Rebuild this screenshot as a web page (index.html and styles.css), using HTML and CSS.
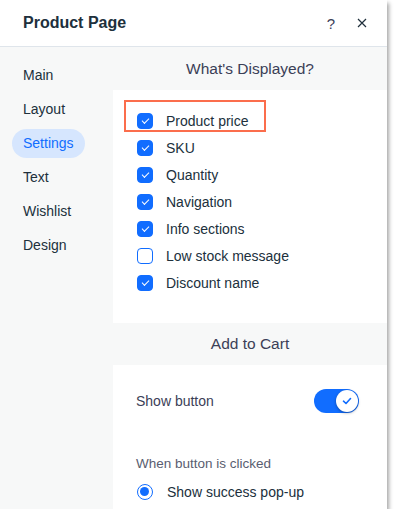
FILE: index.html
```html
<!DOCTYPE html>
<html lang="en">
<head>
    <meta charset="UTF-8">
    <meta name="viewport" content="width=device-width, initial-scale=1.0">
    <title>Product Page - Settings</title>
    <link rel="stylesheet" href="styles.css">
</head>
<body>
    <div class="panel">
        <div class="panel__header">
            <h1>Product Page</h1>
            <div class="header__actions">
                <span class="help__btn">?</span>
                <svg class="close__btn" width="10" height="10" viewBox="0 0 10 10">
                    <path d="M1 1L9 9M9 1L1 9" stroke="#20303c" stroke-width="1.2" fill="none"/>
                </svg>
            </div>
        </div>
        <div class="panel__body">
            <ul class="side__nav">
                <li>Main</li>
                <li>Layout</li>
                <li class="active">Settings</li>
                <li>Text</li>
                <li>Wishlist</li>
                <li>Design</li>
            </ul>
            <div class="panel__content">
                <div class="section__title">What's Displayed?</div>
                <div class="check__list">
                    <div class="highlight"></div>
                    <label class="check__row"><span class="checkbox checked"></span>Product price</label>
                    <label class="check__row"><span class="checkbox checked"></span>SKU</label>
                    <label class="check__row"><span class="checkbox checked"></span>Quantity</label>
                    <label class="check__row"><span class="checkbox checked"></span>Navigation</label>
                    <label class="check__row"><span class="checkbox checked"></span>Info sections</label>
                    <label class="check__row"><span class="checkbox"></span>Low stock message</label>
                    <label class="check__row"><span class="checkbox checked"></span>Discount name</label>
                </div>
                <div class="section__title section__title--cart">Add to Cart</div>
                <div class="cart__settings">
                    <div class="toggle__row">
                        <span>Show button</span>
                        <span class="toggle">
                            <span class="toggle__knob">
                                <svg width="10" height="8" viewBox="0 0 10 8">
                                    <path d="M1.5 4.2L4 6.5L8.5 1.5" stroke="#116dff" stroke-width="1.6" fill="none" stroke-linecap="round" stroke-linejoin="round"/>
                                </svg>
                            </span>
                        </span>
                    </div>
                    <div class="field__label">When button is clicked</div>
                    <label class="radio__row"><span class="radio"></span>Show success pop-up</label>
                </div>
            </div>
        </div>
    </div>
</body>
</html>
```

FILE: styles.css
```css
body {
    margin: 0;
    background: #fff;
    font-family: 'Liberation Sans', Arial, sans-serif;
    color: #20303c;
}
.panel {
    width: 387px;
    height: 509px;
    background: #fff;
    display: flex;
    flex-direction: column;
    box-shadow: 2px 3px 4px rgba(0, 0, 0, 0.35);
    overflow: hidden;
}
.panel__header {
    height: 46px;
    border-bottom: 1px solid #dfe5eb;
    display: flex;
    align-items: center;
    justify-content: space-between;
    padding: 0 20px 0 23px;
    flex-shrink: 0;
}
.panel__header h1 {
    margin: 0;
    font-size: 16px;
    font-weight: bold;
    color: #20303c;
}
.header__actions {
    display: flex;
    align-items: center;
    gap: 22px;
}
.help__btn {
    font-size: 15px;
    color: #3b4057;
}
.close__btn {
    display: block;
}
.panel__body {
    flex: 1;
    display: flex;
    min-height: 0;
}
.side__nav {
    width: 113px;
    flex-shrink: 0;
    background: #f7f8f8;
    margin: 0;
    padding: 14px 0 0 12px;
    box-sizing: border-box;
    list-style: none;
    display: flex;
    flex-direction: column;
    align-items: flex-start;
    gap: 5px;
}
.side__nav li {
    height: 29px;
    line-height: 29px;
    padding: 0 11px;
    font-size: 14px;
    color: #20303c;
    border-radius: 15px;
}
.side__nav li.active {
    background: #d6e6fe;
    color: #116dff;
}
.panel__content {
    flex: 1;
    display: flex;
    flex-direction: column;
}
.section__title {
    height: 43px;
    background: #f7f8f8;
    display: flex;
    align-items: center;
    justify-content: center;
    font-size: 15.5px;
    color: #3b4057;
    flex-shrink: 0;
}
.section__title--cart {
    height: 42px;
}
.check__list {
    position: relative;
    padding: 17px 0 27px 24px;
    display: flex;
    flex-direction: column;
}
.highlight {
    position: absolute;
    left: 11px;
    top: 10px;
    width: 138px;
    height: 28px;
    border: 2px solid #fb6d4c;
}
.check__row {
    height: 27px;
    display: flex;
    align-items: center;
    gap: 13px;
    font-size: 14px;
    color: #20303c;
}
.checkbox {
    width: 16px;
    height: 16px;
    box-sizing: border-box;
    border: 1px solid #116dff;
    border-radius: 4px;
    background: #fff;
    position: relative;
}
.checkbox.checked {
    background: #116dff;
}
.checkbox.checked::after {
    content: "";
    position: absolute;
    left: 4px;
    top: 4px;
    width: 6px;
    height: 3px;
    border-left: 1.6px solid #fff;
    border-bottom: 1.6px solid #fff;
    transform: rotate(-45deg);
}
.cart__settings {
    padding: 24px 28px 0 23px;
    display: flex;
    flex-direction: column;
}
.toggle__row {
    height: 24px;
    display: flex;
    align-items: center;
    justify-content: space-between;
    font-size: 14px;
    color: #3b4057;
}
.toggle {
    width: 45px;
    height: 24px;
    border-radius: 12px;
    background: #116dff;
    display: flex;
    align-items: center;
    justify-content: flex-end;
    padding: 1px;
    box-sizing: border-box;
}
.toggle__knob {
    width: 22px;
    height: 22px;
    border-radius: 50%;
    background: #fff;
    box-shadow: 0 1px 3px rgba(0, 0, 0, 0.35);
    display: flex;
    align-items: center;
    justify-content: center;
}
.field__label {
    margin-top: 42px;
    height: 18px;
    line-height: 18px;
    font-size: 13.5px;
    color: #595d70;
}
.radio__row {
    margin-top: 10px;
    height: 18px;
    display: flex;
    align-items: center;
    gap: 14px;
    font-size: 14px;
    color: #20303c;
    padding-left: 1px;
}
.radio {
    width: 16px;
    height: 16px;
    box-sizing: border-box;
    border-radius: 50%;
    border: 1.5px solid #116dff;
    position: relative;
}
.radio::after {
    content: "";
    position: absolute;
    left: 2px;
    top: 2px;
    width: 9px;
    height: 9px;
    border-radius: 50%;
    background: #116dff;
}
```
